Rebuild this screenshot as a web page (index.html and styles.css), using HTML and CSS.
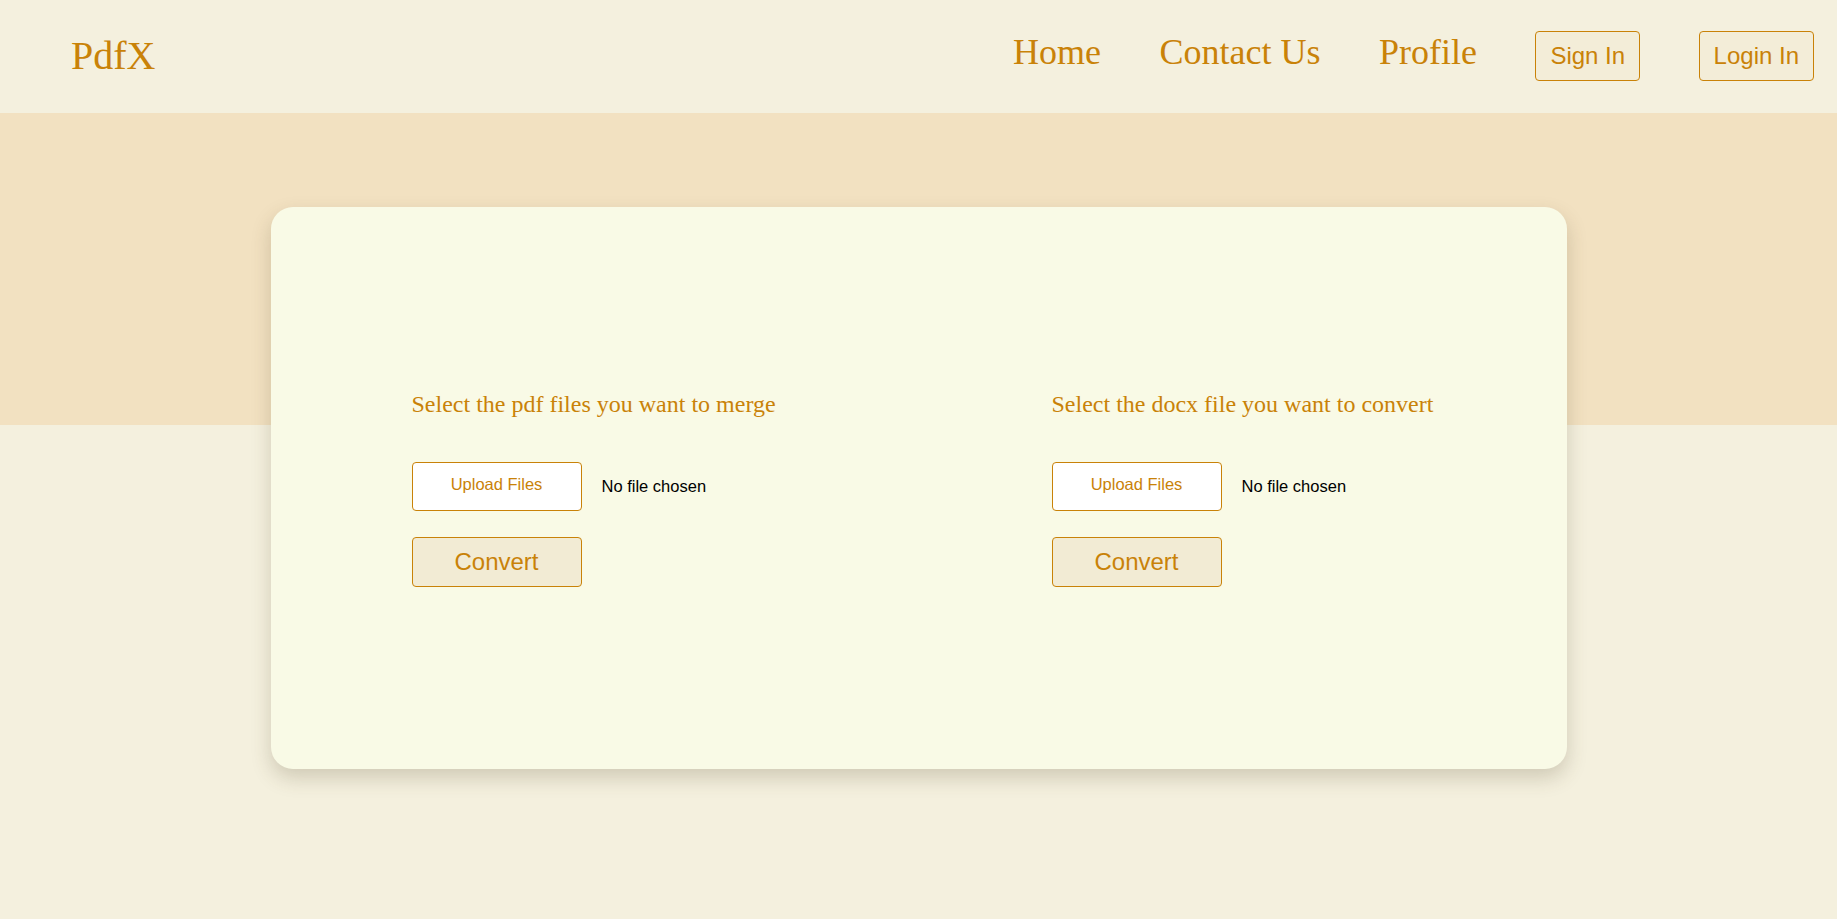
FILE: index.html
```html
<!DOCTYPE html>
<html lang="en">
<head>
<meta charset="utf-8">
<title>PdfX</title>
<link rel="stylesheet" href="styles.css">
</head>
<body>
<header class="topbar">
  <a class="logo" href="#">PdfX</a>
  <nav class="nav">
    <a class="nav-link" href="#">Home</a>
    <a class="nav-link" href="#">Contact Us</a>
    <a class="nav-link" href="#">Profile</a>
    <button class="nav-btn" type="button">Sign In</button>
    <button class="nav-btn" type="button">Login In</button>
  </nav>
</header>
<main class="main">
  <section class="card">
    <div class="tool">
      <h2 class="tool-title">Select the pdf files you want to merge</h2>
      <div class="file-row">
        <label class="upload-btn">Upload Files</label>
        <span class="file-status">No file chosen</span>
      </div>
      <button class="convert-btn" type="button">Convert</button>
    </div>
    <div class="tool">
      <h2 class="tool-title">Select the docx file you want to convert</h2>
      <div class="file-row">
        <label class="upload-btn">Upload Files</label>
        <span class="file-status">No file chosen</span>
      </div>
      <button class="convert-btn" type="button">Convert</button>
    </div>
  </section>
</main>
</body>
</html>
```

FILE: styles.css
```css
* { box-sizing: border-box; }

html, body {
  margin: 0;
  padding: 0;
}

body {
  background: #f4f0de;
  font-family: "Liberation Serif", "Times New Roman", serif;
  color: #c98208;
  min-height: 919px;
}

.topbar {
  height: 113px;
  display: flex;
  align-items: center;
  justify-content: space-between;
  padding: 0 23px 0 71px;
  background: #f4f0de;
}

.logo {
  font-family: "Liberation Serif", serif;
  font-size: 40px;
  color: #c98208;
  text-decoration: none;
  margin-bottom: 2px;
}

.nav {
  display: flex;
  align-items: center;
  gap: 58.5px;
}

.nav-link {
  font-family: "Liberation Serif", serif;
  font-size: 36px;
  color: #c98208;
  text-decoration: none;
  padding-bottom: 9px;
}

.nav-btn {
  font-family: "Liberation Sans", Arial, sans-serif;
  font-size: 24px;
  color: #c98208;
  background: #f3edd8;
  border: 1px solid #c98208;
  border-radius: 4px;
  padding: 10px 14px;
  line-height: normal;
  margin: 0 0 2px;
}

.main {
  background: linear-gradient(to bottom, #f2e1c1 0, #f2e1c1 312px, #f4f0de 312px);
  padding-top: 94px;
  padding-bottom: 60px;
}

.card {
  width: 1296px;
  height: 562px;
  margin: 0 auto;
  background: #f9fae6;
  border-radius: 22px;
  box-shadow: 0 9px 20px rgba(80, 70, 40, 0.22);
  padding: 184px 0 0 141px;
  display: grid;
  grid-template-columns: 640px 1fr;
  align-items: start;
}

.tool {
  display: flex;
  flex-direction: column;
  align-items: flex-start;
}

.tool-title {
  margin: 0;
  font-family: "Liberation Serif", serif;
  font-weight: normal;
  font-size: 24px;
  line-height: normal;
  color: #c98208;
}

.file-row {
  display: flex;
  align-items: center;
  margin-top: 44px;
}

.upload-btn {
  width: 170px;
  height: 49px;
  padding: 12px 0 16px;
  text-align: center;
  font-family: "Liberation Sans", Arial, sans-serif;
  font-size: 16.5px;
  line-height: 19px;
  color: #c98208;
  background: #ffffff;
  border: 1px solid #c98208;
  border-radius: 4px;
}

.file-status {
  margin-left: 20px;
  font-family: "Liberation Sans", Arial, sans-serif;
  font-size: 16.5px;
  line-height: 19px;
  color: #000000;
}

.convert-btn {
  margin-top: 26px;
  width: 170px;
  height: 49.5px;
  padding: 0;
  font-family: "Liberation Sans", Arial, sans-serif;
  font-size: 24px;
  line-height: normal;
  color: #c98208;
  background: #f2ebd4;
  border: 1px solid #c98208;
  border-radius: 4px;
}
```
